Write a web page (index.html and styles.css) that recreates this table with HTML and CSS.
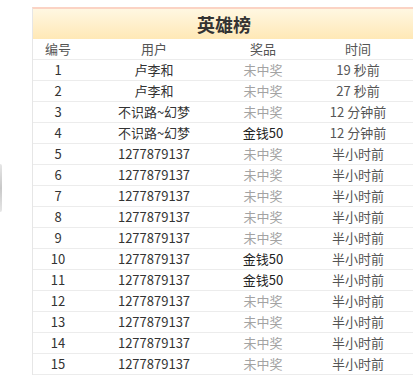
FILE: index.html
```html
<!DOCTYPE html>
<html lang="zh">
<head>
<meta charset="utf-8">
<link rel="stylesheet" href="styles.css">
</head>
<body>
<div class="edge"></div>
<div class="board">
  <div class="title">英雄榜</div>
  <table class="rank">
    <colgroup><col class="c1"><col class="c2"><col class="c3"><col class="c4"></colgroup>
    <thead>
      <tr><th>编号</th><th>用户</th><th>奖品</th><th>时间</th></tr>
    </thead>
    <tbody>
      <tr><td>1</td><td>卢李和</td><td class="none">未中奖</td><td class="time">19 秒前</td></tr>
      <tr><td>2</td><td>卢李和</td><td class="none">未中奖</td><td class="time">27 秒前</td></tr>
      <tr><td>3</td><td>不识路~幻梦</td><td class="none">未中奖</td><td class="time">12 分钟前</td></tr>
      <tr><td>4</td><td>不识路~幻梦</td><td class="win">金钱50</td><td class="time">12 分钟前</td></tr>
      <tr><td>5</td><td>1277879137</td><td class="none">未中奖</td><td class="time">半小时前</td></tr>
      <tr><td>6</td><td>1277879137</td><td class="none">未中奖</td><td class="time">半小时前</td></tr>
      <tr><td>7</td><td>1277879137</td><td class="none">未中奖</td><td class="time">半小时前</td></tr>
      <tr><td>8</td><td>1277879137</td><td class="none">未中奖</td><td class="time">半小时前</td></tr>
      <tr><td>9</td><td>1277879137</td><td class="none">未中奖</td><td class="time">半小时前</td></tr>
      <tr><td>10</td><td>1277879137</td><td class="win">金钱50</td><td class="time">半小时前</td></tr>
      <tr><td>11</td><td>1277879137</td><td class="win">金钱50</td><td class="time">半小时前</td></tr>
      <tr><td>12</td><td>1277879137</td><td class="none">未中奖</td><td class="time">半小时前</td></tr>
      <tr><td>13</td><td>1277879137</td><td class="none">未中奖</td><td class="time">半小时前</td></tr>
      <tr><td>14</td><td>1277879137</td><td class="none">未中奖</td><td class="time">半小时前</td></tr>
      <tr><td>15</td><td>1277879137</td><td class="none">未中奖</td><td class="time">半小时前</td></tr>
    </tbody>
  </table>
</div>
</body>
</html>
```
FILE: styles.css
```css
html, body {
  margin: 0;
  padding: 0;
  background: #fff;
  overflow: hidden;
  width: 413px;
  height: 390px;
}
body {
  position: relative;
  font-family: "Noto Sans CJK SC", "Noto Sans", sans-serif;
  font-size: 13px;
  color: #333;
}
.edge {
  position: absolute;
  left: 0;
  top: 164px;
  width: 2px;
  height: 48px;
  border-radius: 0 2px 2px 0;
  background: linear-gradient(#e6e6e6, #c8c8c8 50%, #e6e6e6);
}
.board {
  margin: 7px 0 0 32px;
  width: 382px;
  border-left: 1px solid #e6e6e6;
  border-top: 2px solid #fbd3c4;
}
.title {
  height: 30px;
  line-height: 30px;
  text-align: center;
  font-size: 18px;
  font-weight: bold;
  color: #333;
  background: linear-gradient(#fff7e2, #ffe8b6);
}
.rank {
  width: 382px;
  border-collapse: collapse;
  table-layout: fixed;
}
.c1 { width: 50px; }
.c2 { width: 142px; }
.c3 { width: 76px; }
.c4 { width: 114px; }
.rank th, .rank td {
  height: 20px;
  padding: 0;
  line-height: 20px;
  text-align: center;
  border-bottom: 1px solid #ececec;
  white-space: nowrap;
}
.rank th {
  font-weight: normal;
  color: #555;
}
.rank td { color: #333; }
.rank td.none { color: #a3a3a3; }
.rank td.win { color: #222; }
.rank td.time { color: #555; }
```
